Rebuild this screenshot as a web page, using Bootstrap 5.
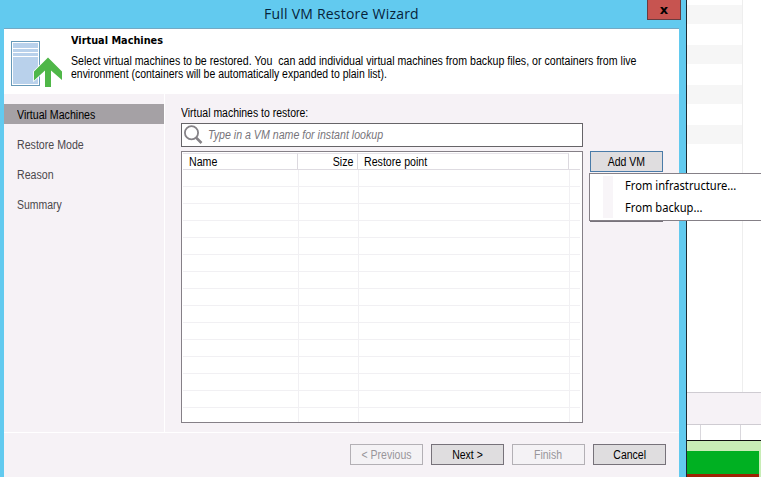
<!DOCTYPE html>
<html lang="en">
<head>
<meta charset="utf-8">
<meta name="viewport" content="width=device-width, initial-scale=1">
<title>Full VM Restore Wizard</title>
<link href="https://cdn.jsdelivr.net/npm/bootstrap@5.3.0/dist/css/bootstrap.min.css" rel="stylesheet">
<style>
body{font:12px/13px "Liberation Sans",Arial,sans-serif;color:#000;width:761px;height:477px;background:#fff}
.wizard{width:687px;background:#62caef;border-right:1px solid #1c2a33;padding:0 7px 0 4px}
.titlebar{height:29px;border-bottom:1px solid #74a9c4;font:14px/27px "Open Sans","Noto Sans",sans-serif;letter-spacing:.22px;color:#06233a}
.close-btn{width:34px;height:20px;right:-2px;top:0;background:#c75450;border:1px solid #693c40;border-top:0;color:#000;padding:0;font:bold 13px/16px "DejaVu Sans",sans-serif}
.intro{height:65px;background:#fff}
.intro-icon{width:60px;height:65px}
.intro-text{padding:5px 0 0 7px}
.intro-title{font:bold 11px/13px "DejaVu Sans",sans-serif}
.main-area{height:339px;background:#f6f2f6;border-bottom:1px solid #fff}
.steps{width:161px;border-right:1px solid #fff;padding-top:10px;color:#4b484c}
.step{height:20px;margin-bottom:10px;padding:5px 0 0 13px}
.step.current{background:#a5a1a5;color:#000}
.work{padding:13px 0 0 16px}
.left-pane{width:402px}
.search-box{height:24px;margin-top:3px;background:#fff;border:1px solid #666468;padding-left:2px;color:#77747a;font-style:italic}
.grid-box{height:272px;margin-top:4px;background:#fff;border:1px solid #858087;padding:1px 2px 0 1px}
.grid-head{height:17px;border-bottom:1px solid #dedbe1;line-height:17px}
.grid-head>div{border-right:1px solid #dcd9df;border-top:1px solid #e7e4ea}
.c-name{width:115px;padding-left:6px}.c-size{width:60px;padding-right:4px}.c-point{width:211px;padding-left:6px}
.grid-rows{height:252px;background:
 linear-gradient(#f1f0f3,#f1f0f3) 115px 0/1px 100% no-repeat,
 linear-gradient(#f1f0f3,#f1f0f3) 175px 0/1px 100% no-repeat,
 linear-gradient(#f1f0f3,#f1f0f3) 386px 0/1px 100% no-repeat,
 repeating-linear-gradient(#fff 0 16px,#f1f0f3 16px 17px)}
.side-pane{margin:44px 0 0 7px}
.wbtn{display:block;width:73px;height:21px;padding:1px 0 0;background:#dfdddf;border:1px solid #77727a;color:#000;font-size:12px;line-height:18px;text-align:center}
.wbtn.focus{border-color:#4a7ba8}
.wbtn.off{background:#f4f2f5;border-color:#b3b0b5;color:#98959a}
.under{height:49px;margin-top:1px}
.drop{left:-1px;top:22px;width:173px;height:48px;background:#fff;border:1px solid #858087;border-right:0;padding:1px 0 0 35px;font:12px/22px "Noto Sans","Open Sans",sans-serif;z-index:5}
.drop::before{content:"";position:absolute;left:13px;top:2px;bottom:2px;width:10px;background:#f8f5f8}
.footer{height:44px;background:#f6f2f6;padding:11px 13px 0 0;gap:8px}
.behind{width:74px}
.stripes{height:392px}
.stripes>div{width:56px;border-right:1px solid #eee;background:linear-gradient(#fff,#fff) 0 144px/100% 300px no-repeat,repeating-linear-gradient(#fff 0 5px,#f6f6f6 5px 24px,#fff 24px 40px)}
.band{height:33px;background:#f6f2f6;border:solid #cfccd2;border-width:1px 0}
.ruler{height:15px;background:linear-gradient(#d9d7dc,#d9d7dc) 13px 0/1px 100% no-repeat,linear-gradient(#d9d7dc,#d9d7dc) 53px 0/1px 100% no-repeat}
.chart{height:37px;border-top:1px solid #111;background:#c8edb6;padding:10px 2px 0 0}
.chart .ok{height:23px;background:#00b022}
.chart .bad{height:3px;background:#9e2305}
/* condensed interface lettering */
.t{display:inline-block;white-space:pre;transform:scaleX(.885);transform-origin:0 50%}
.t-d2,.t-l,.s4{transform:scaleX(.872)}
.g2{transform-origin:100% 50%}
.wbtn .t{transform:scaleX(.875);transform-origin:50% 50%}
.m1,.m2{transform:scaleX(.93)}
</style>
</head>
<body class="d-flex overflow-hidden m-0">
<main class="wizard flex-shrink-0 d-flex flex-column">
  <header class="titlebar position-relative text-center flex-shrink-0">Full VM Restore Wizard
    <button class="close-btn position-absolute rounded-0" aria-label="Close">x</button></header>
  <section class="intro d-flex flex-shrink-0">
    <svg class="intro-icon flex-shrink-0" viewBox="0 0 60 65">
      <rect x="7.5" y="12.5" width="28" height="44" fill="#b9d1eb" stroke="#6699b8"/>
      <rect x="8.5" y="13.5" width="26" height="42" fill="none" stroke="#fff"/>
      <path d="M9 19.500H34M9 23.500H34M9 27.500H34" stroke="#fff" stroke-width="1.200"/>
      <path d="M44 28.500L30 42.500V51.500L41 41.500V58H47V41.500L58 51V42.500Z" fill="#4fb748" stroke="#fff" stroke-width="1.500" paint-order="stroke"/>
    </svg>
    <div class="intro-text">
      <div class="intro-title"><span class="t t-h">Virtual Machines</span></div>
      <div class="mt-2 text-nowrap"><span class="t t-d1">Select virtual machines to be restored. You  can add individual virtual machines from backup files, or containers from live</span><br><span class="t t-d2">environment (containers will be automatically expanded to plain list).</span></div>
    </div>
  </section>
  <section class="main-area d-flex flex-shrink-0">
    <nav class="steps flex-shrink-0">
      <div class="step current"><span class="t s1">Virtual Machines</span></div>
      <div class="step"><span class="t s2">Restore Mode</span></div>
      <div class="step"><span class="t s3">Reason</span></div>
      <div class="step"><span class="t s4">Summary</span></div>
    </nav>
    <div class="work d-flex">
      <div class="left-pane">
        <div><span class="t t-l">Virtual machines to restore:</span></div>
        <div class="search-box d-flex align-items-center">
          <svg width="20" height="20" viewBox="0 0 20 20" fill="none" stroke="#858287"><circle cx="7.500" cy="7.800" r="6.600" stroke-width="1.800"/><path d="M12.200 12.800L17.500 18" stroke-width="2.600"/></svg>
          <span class="t t-p ms-1">Type in a VM name for instant lookup</span>
        </div>
        <div class="grid-box">
          <div class="grid-head d-flex"><div class="c-name"><span class="t g1">Name</span></div><div class="c-size text-end"><span class="t g2">Size</span></div><div class="c-point"><span class="t g3">Restore point</span></div></div>
          <div class="grid-rows"></div>
        </div>
      </div>
      <div class="side-pane position-relative">
        <button class="wbtn focus rounded-0"><span class="t b0">Add VM</span></button>
        <div class="wbtn under"></div>
        <div class="drop position-absolute">
          <div><span class="t m1">From infrastructure...</span></div>
          <div><span class="t m2">From backup...</span></div>
        </div>
      </div>
    </div>
  </section>
  <footer class="footer d-flex justify-content-end">
    <button class="wbtn off rounded-0"><span class="t b1">&lt; Previous</span></button>
    <button class="wbtn rounded-0"><span class="t b2">Next &gt;</span></button>
    <button class="wbtn off rounded-0"><span class="t b3">Finish</span></button>
    <button class="wbtn rounded-0"><span class="t b4">Cancel</span></button>
  </footer>
</main>
<aside class="behind flex-shrink-0">
  <div class="stripes"><div class="h-100"></div></div>
  <div class="band"></div>
  <div class="ruler"></div>
  <div class="chart"><div class="ok"></div><div class="bad"></div></div>
</aside>
<script src="https://cdn.jsdelivr.net/npm/bootstrap@5.3.0/dist/js/bootstrap.bundle.min.js"></script>
</body>
</html>
